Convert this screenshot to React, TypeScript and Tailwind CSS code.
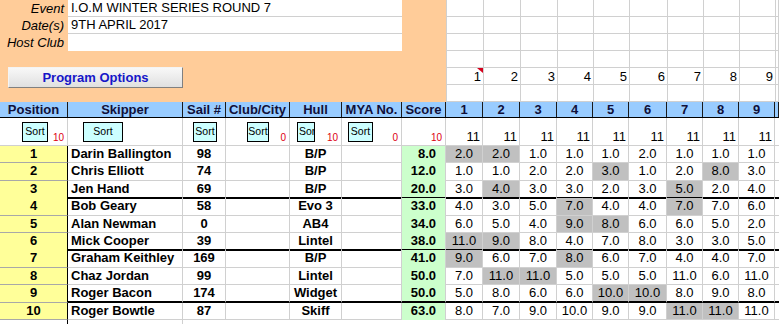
import React from 'react';

// Column widths of the results sheet, left to right (last one is the cut-off column).
const COLS = 'grid grid-cols-[68px_115px_43px_64px_52px_60px_44px_37px_37px_37px_36px_36px_38px_36px_36px_36px_1fr]';
const RCOLS = 'grid grid-cols-[37px_37px_37px_36px_36px_38px_36px_36px_36px_1fr]';

const HEADERS = ['Position', 'Skipper', 'Sail #', 'Club/City', 'Hull', 'MYA No.', 'Score', '1', '2', '3', '4', '5', '6', '7', '8', '9', ''];

const SORTS = [
  { btn: 'ml-[22px] w-[26px] text-center', label: 'Sort', red: '10' },
  { btn: 'ml-[15px] w-[40px] text-center', label: 'Sort', red: '' },
  { btn: 'ml-[10px] w-[24px] text-center', label: 'Sort', red: '' },
  { btn: 'ml-[21px] w-[22px] text-center', label: 'Sort', red: '0' },
  { btn: 'ml-[7px] w-[18px] text-left pl-[1px]', label: 'Sor', red: '10' },
  { btn: 'ml-[6px] w-[25px] text-center', label: 'Sort', red: '0' },
];

type Row = { pos: number; name: string; sail: string; hull: string; score: string; r: string[]; d: number[] };

const ROWS: Row[] = [
  { pos: 1, name: 'Darin Ballington', sail: '98', hull: 'B/P', score: '8.0', r: ['2.0', '2.0', '1.0', '1.0', '1.0', '2.0', '1.0', '1.0', '1.0'], d: [0, 1] },
  { pos: 2, name: 'Chris Elliott', sail: '74', hull: 'B/P', score: '12.0', r: ['1.0', '1.0', '2.0', '2.0', '3.0', '1.0', '2.0', '8.0', '3.0'], d: [4, 7] },
  { pos: 3, name: 'Jen Hand', sail: '69', hull: 'B/P', score: '20.0', r: ['3.0', '4.0', '3.0', '3.0', '2.0', '3.0', '5.0', '2.0', '4.0'], d: [1, 6] },
  { pos: 4, name: 'Bob Geary', sail: '58', hull: 'Evo 3', score: '33.0', r: ['4.0', '3.0', '5.0', '7.0', '4.0', '4.0', '7.0', '7.0', '6.0'], d: [3, 6] },
  { pos: 5, name: 'Alan Newman', sail: '0', hull: 'AB4', score: '34.0', r: ['6.0', '5.0', '4.0', '9.0', '8.0', '6.0', '6.0', '5.0', '2.0'], d: [3, 4] },
  { pos: 6, name: 'Mick Cooper', sail: '39', hull: 'Lintel', score: '38.0', r: ['11.0', '9.0', '8.0', '4.0', '7.0', '8.0', '3.0', '3.0', '5.0'], d: [0, 1] },
  { pos: 7, name: 'Graham Keithley', sail: '169', hull: 'B/P', score: '41.0', r: ['9.0', '6.0', '7.0', '8.0', '6.0', '7.0', '4.0', '4.0', '7.0'], d: [0, 3] },
  { pos: 8, name: 'Chaz Jordan', sail: '99', hull: 'Lintel', score: '50.0', r: ['7.0', '11.0', '11.0', '5.0', '5.0', '5.0', '11.0', '6.0', '11.0'], d: [1, 2] },
  { pos: 9, name: 'Roger Bacon', sail: '174', hull: 'Widget', score: '50.0', r: ['5.0', '8.0', '6.0', '6.0', '10.0', '10.0', '8.0', '9.0', '8.0'], d: [4, 5] },
  { pos: 10, name: 'Roger Bowtle', sail: '87', hull: 'Skiff', score: '63.0', r: ['8.0', '7.0', '9.0', '10.0', '9.0', '9.0', '11.0', '11.0', '11.0'], d: [6, 7] },
];

const FIELDS = [
  { label: 'Event', value: 'I.O.M WINTER SERIES ROUND 7' },
  { label: 'Date(s)', value: '9TH APRIL 2017' },
  { label: 'Host Club', value: '' },
];

export default function App() {
  return (
    <div className="w-[779px] h-[324px] overflow-hidden bg-white text-[13px] text-black font-['Liberation_Sans',Arial,sans-serif]">
      {/* event details + round number strip */}
      <div className="flex h-[102px]">
        <div className="w-[446px] shrink-0 bg-[#ffcc99]">
          {FIELDS.map((f, i) => (
            <div key={f.label} className="flex h-[17px]">
              <div className="w-[68px] pr-[4px] text-right italic leading-[17px]">{f.label}</div>
              <div className={`w-[334px] bg-white pl-[3px] leading-[16px] ${i < 2 ? 'border-b border-[#d0d0d0]' : ''}`}>{f.value}</div>
            </div>
          ))}
          <button className="mt-[16px] ml-[8px] w-[175px] h-[21px] border border-t-[#f4f4f4] border-l-[#f4f4f4] border-r-[#808080] border-b-[#808080] bg-linear-to-b from-[#f8f8f8] to-[#e0e0e0] font-bold text-[#1616c8] leading-[18px]">
            Program Options
          </button>
        </div>
        <div className={`${RCOLS} flex-1 border-l border-[#d0d0d0]`}>
          {Array.from({ length: 60 }).map((_, k) => {
            const row = Math.floor(k / 10);
            const col = k % 10;
            const showNum = row === 4 && col < 9;
            return (
              <div key={k} className="relative h-[17px] border-r border-b border-[#d0d0d0] flex items-end justify-end pr-[2px]">
                {showNum && <span className="leading-[15px]">{col + 1}</span>}
                {showNum && col === 0 && (
                  <svg width="6" height="5" className="absolute top-0 right-0" viewBox="0 0 6 5">
                    <polygon points="0,0 6,0 6,5" fill="#d4001c" />
                  </svg>
                )}
              </div>
            );
          })}
        </div>
      </div>

      {/* column headers */}
      <div className={`${COLS} h-[16px] bg-[#99ccff] border-b border-black`}>
        {HEADERS.map((h, i) => (
          <div key={i} className="border-r border-[#1a1a1a] text-center font-bold text-[#10103a] leading-[15px] whitespace-nowrap overflow-hidden">
            {h}
          </div>
        ))}
      </div>

      {/* sort buttons */}
      <div className={`${COLS} h-[28px]`}>
        {SORTS.map((s, i) => (
          <div key={i} className="flex items-center border-r border-b border-[#d0d0d0]">
            <div className={`${s.btn} h-[20px] mt-[1px] shrink-0 border border-black bg-[#ccffff] text-[10.5px] leading-[17px] overflow-hidden whitespace-nowrap`}>
              {s.label}
            </div>
            {s.red && <span className="ml-auto self-end pr-[3px] pb-[2px] text-[10px] leading-[11px] text-[#dd0011]">{s.red}</span>}
          </div>
        ))}
        <div className="flex items-end justify-end border-r border-b border-[#d0d0d0] pr-[3px] pb-[2px]">
          <span className="text-[10px] leading-[11px] text-[#dd0011]">10</span>
        </div>
        {Array.from({ length: 9 }).map((_, i) => (
          <div key={i} className="flex items-end justify-end border-r border-b border-[#d0d0d0] pr-[2px] pb-[1px]">
            <span className="leading-[15px]">11</span>
          </div>
        ))}
        <div className="border-b border-[#d0d0d0]" />
      </div>

      {/* results */}
      {ROWS.map((r) => {
        const heavy = r.pos % 3 === 0;
        const line = heavy ? 'border-b-2 border-b-black' : 'border-b';
        return (
          <div key={r.pos} className={`${COLS} h-[17.4px] leading-[16px]`}>
            <div className="bg-[#ffff99] border-r border-r-black border-b border-b-[#a8a8a8] text-center font-bold">{r.pos}</div>
            <div className={`border-r border-[#d0d0d0] ${line} pl-[3px] font-bold whitespace-nowrap`}>{r.name}</div>
            <div className={`border-r border-[#d0d0d0] ${line} text-center font-bold`}>{r.sail}</div>
            <div className={`border-r border-[#d0d0d0] ${line}`} />
            <div className={`border-r border-[#d0d0d0] ${line} text-center font-bold`}>{r.hull}</div>
            <div className={`border-r border-[#d0d0d0] ${line}`} />
            <div className={`bg-[#ccffcc] border-r border-r-[#d0d0d0] ${heavy ? 'border-b-2 border-b-black' : ''} text-right pr-[9px] font-bold`}>{r.score}</div>
            {r.r.map((v, i) => (
              <div key={i} className={`border-r border-[#d0d0d0] ${line} text-center ${r.d.includes(i) ? 'bg-[#c0c0c0]' : ''}`}>{v}</div>
            ))}
            <div className={`border-[#d0d0d0] ${line}`} />
          </div>
        );
      })}
      <div className={`${COLS} h-[6px]`}>
        <div className="border-r border-black" />
        <div className="border-r border-[#d0d0d0]" />
      </div>
    </div>
  );
}
